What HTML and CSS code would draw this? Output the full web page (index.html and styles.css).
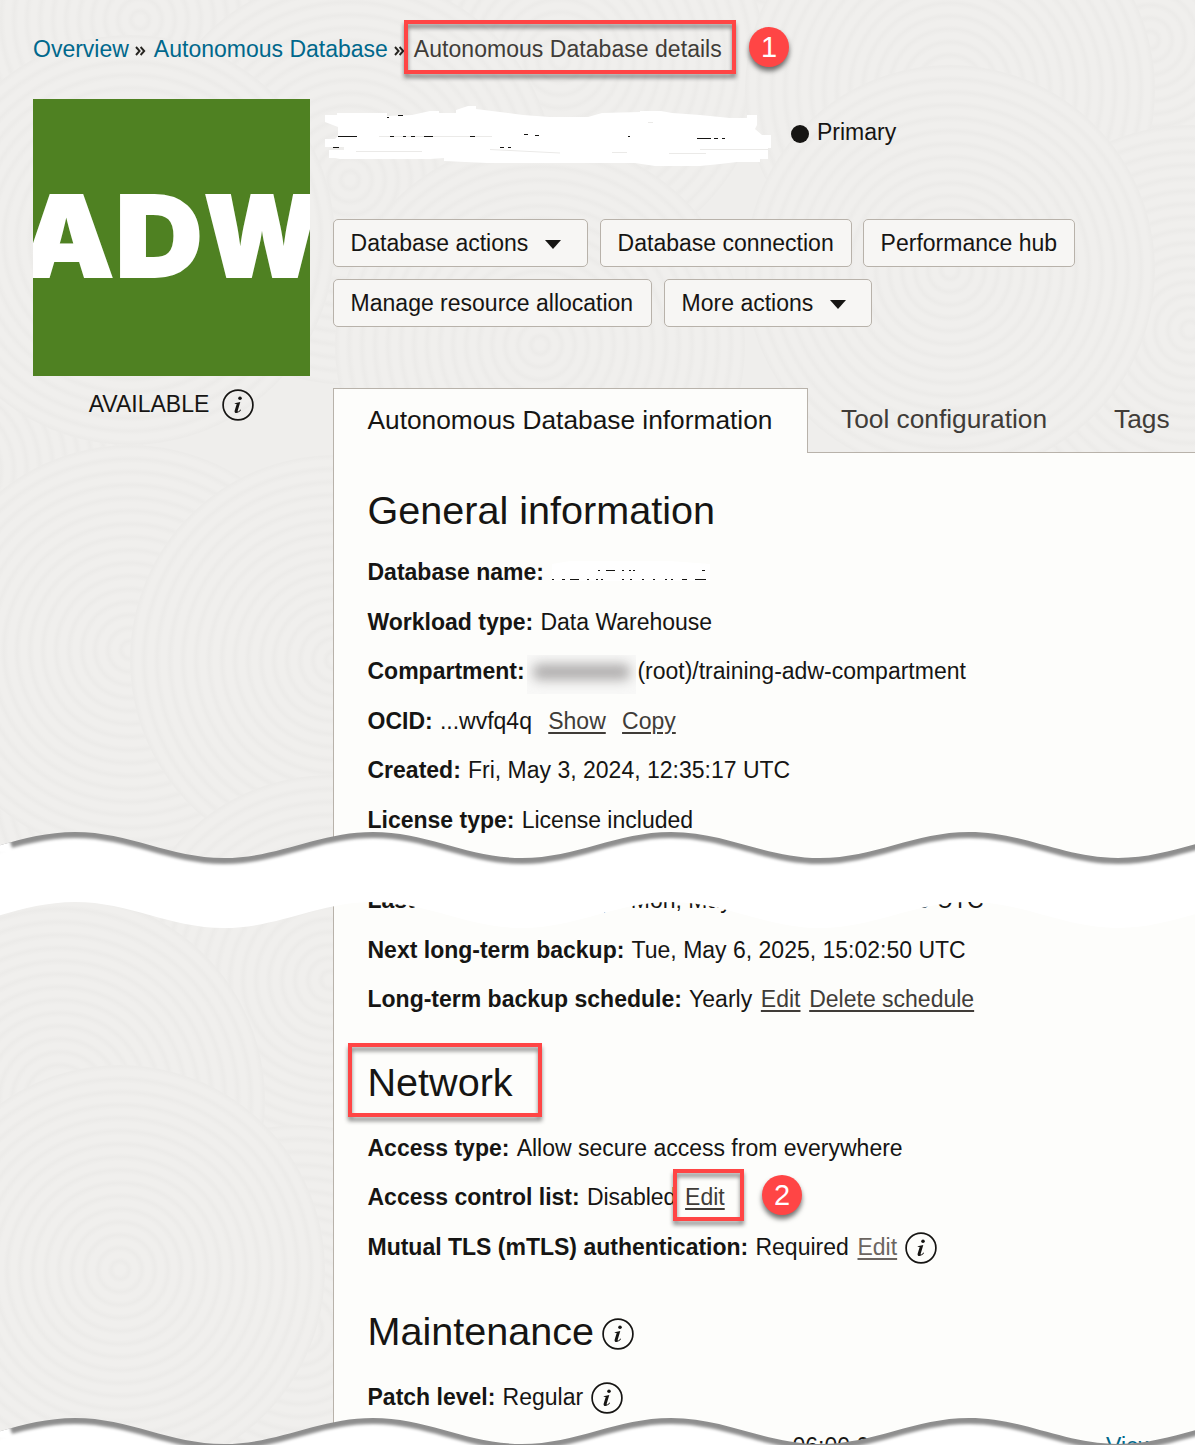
FILE: index.html
```html
<!DOCTYPE html>
<html lang="en">
<head>
<meta charset="utf-8">
<title>Autonomous Database details</title>
<link rel="stylesheet" href="styles.css">
</head>
<body>
<svg class="defs" width="0" height="0" aria-hidden="true">
  <defs>
    <radialGradient id="grain" gradientUnits="userSpaceOnUse" cx="0" cy="0" r="13" spreadMethod="repeat">
      <stop offset="0" stop-color="#f0efed"/><stop offset=".35" stop-color="#f0efed"/>
      <stop offset=".7" stop-color="#ecebe9"/><stop offset="1" stop-color="#f0efed"/>
    </radialGradient>
    <circle id="disc" r="205" fill="url(#grain)"/>
    <symbol id="info" viewBox="0 0 32 32">
      <circle cx="16" cy="16" r="14.900" fill="none" stroke="#161513" stroke-width="1.700"/>
      <circle cx="18" cy="9.300" r="1.800" fill="#161513"/>
      <path d="M12.700 14.200l5.600-1.200-2.600 8.700c-.3 1 .5 1.100 1.100.5l1.700-1.700.6.600c-1.800 2.200-3.300 3-4.700 3-1.600 0-2.100-1.100-1.700-2.600l2-6.500-2-.2z" fill="#161513"/>
    </symbol>
    <path id="wave" d="M-74 26C-19.700 26 20.700 0 75 0S169.700 26 224 26S318.700 0 373 0S467.700 26 522 26S616.700 0 671 0S765.700 26 820 26S914.700 0 969 0S1063.700 26 1118 26S1212.700 0 1267 0V56H-74Z"/>
    <clipPath id="wave-clip"><use href="#wave"/></clipPath>
    <filter id="soft" x="-5%" y="-20%" width="110%" height="140%"><feGaussianBlur stdDeviation="1.5"/></filter>
  </defs>
</svg>
<div class="page">
  <svg class="texture" viewBox="0 0 1195 1445" aria-hidden="true">
    <use href="#disc" x="140" y="20"/><use href="#disc" x="780" y="-70"/><use href="#disc" x="1150" y="40"/>
    <use href="#disc" x="560" y="60"/><use href="#disc" x="350" y="180"/><use href="#disc" x="950" y="90"/>
    <use href="#disc" x="1190" y="330"/><use href="#disc" x="950" y="270"/><use href="#disc" x="540" y="345"/>
    <use href="#disc" x="-60" y="470"/><use href="#disc" x="130" y="240"/><use href="#disc" x="-50" y="880"/>
    <use href="#disc" x="160" y="780"/><use href="#disc" x="130" y="650"/><use href="#disc" x="335" y="660"/>
    <use href="#disc" x="330" y="980"/><use href="#disc" x="-40" y="1350"/><use href="#disc" x="60" y="1100"/>
    <use href="#disc" x="300" y="1330"/><use href="#disc" x="120" y="1270"/>
  </svg>

  <nav class="crumbs">
    <a>Overview</a><svg class="sep" viewBox="0 0 11 10"><path d="M1 1l3.600 4-3.600 4M5.600 1l3.600 4-3.600 4"/></svg>
    <a>Autonomous Database</a><svg class="sep sep2" viewBox="0 0 11 10"><path d="M1 1l3.600 4-3.600 4M5.600 1l3.600 4-3.600 4"/></svg>
    <span class="current">Autonomous Database details</span>
  </nav>

  <div class="columns">
    <aside class="side">
      <svg class="tile" viewBox="0 0 277 277">
        <rect width="277" height="277" fill="#4f8122"/>
        <g class="tile-text">
          <text x="-13" y="178" textLength="94" lengthAdjust="spacingAndGlyphs">A</text>
          <text x="82.500" y="178" textLength="87" lengthAdjust="spacingAndGlyphs">D</text>
          <text x="171" y="178" textLength="116" lengthAdjust="spacingAndGlyphs">W</text>
        </g>
      </svg>
      <div class="status">AVAILABLE <svg class="info"><use href="#info"/></svg></div>
    </aside>

    <main class="main">
      <header class="title">
        <svg class="scribble" viewBox="325 100 450 70">
          <path fill="#fff" d="M325 115H337V113H387V116L412 115L430 111H439V113H456V110L462 108L468 106H476V109L500 112L523 115L550 117H588L602 113L640 112V111H661L672 113L700 115L730 118L747 118V115H757V125L755 129L762 135H771V148H768V159H760V162H737L720 164L700 166H655L635 163H487L444 161V158L430 159H340L335 158H329V150H344V147H325V139H335L338 136V127L325 122Z"/>
          <path stroke="#ebeae8" d="M356 151.500H422M379 136.500H492M490 149.500L560 153M612 152.500H627M669 153.500H706M648 122.500H653M700 149.500H768"/>
          <path stroke="#161513" d="M338 136.500H357M333 147.500H339M387 117.500H389M398 115.500H403M390 136.500H394M403 136.500H406M411 136.500H415M424 136.500H433M470 136.500H475M500 147.500H504M508 147.500H511M524 134.500H528M535 135.500H539M628 136.500H630M697 138.500H711M714 138.500H718M722 138.500H725"/>
        </svg>
        <span class="dot"></span><span>Primary</span>
      </header>

      <div class="actions">
        <button class="btn w1">Database actions<i class="caret"></i></button>
        <button class="btn w2">Database connection</button>
        <button class="btn w3">Performance hub</button>
        <button class="btn w4">Manage resource allocation</button>
        <button class="btn w5">More actions<i class="caret"></i></button>
      </div>

      <div class="tabs">
        <div class="tab active">Autonomous Database information</div>
        <div class="tab tool">Tool configuration</div>
        <div class="tab tags">Tags</div>
      </div>

      <section class="panel">
        <h2 class="general">General information</h2>
        <div class="row"><b>Database name:</b>
          <svg class="hidden-name" viewBox="0 0 160 22"><path fill="#fff" d="M2 3L20 0H120L160 3V20H2Z"/><path stroke="#161513" stroke-width="1.200" d="M2 18.500h2M12 18.500h3M20 18.500h9M37 18.500h2M46 18.500h2M51 18.500h2M72 18.500h2M80 18.500h2M92 18.500h2M103 18.500h2M115 18.500h2M121 18.500h2M132 18.500h5M145 18.500h11M48 9.500h2M56 9.500h9M72 9.500h2M79 9.500h2M83 9.500h2M152 9.500h3"/></svg>
        </div>
        <div class="row"><b>Workload type:</b><span>Data Warehouse</span></div>
        <div class="row"><b>Compartment:</b><span class="smudge"><i></i></span><span>(root)/training-adw-compartment</span></div>
        <div class="row"><b>OCID:</b><span>...wvfq4q</span><a class="far">Show</a><a class="far">Copy</a></div>
        <div class="row"><b>Created:</b><span>Fri, May 3, 2024, 12:35:17 UTC</span></div>
        <div class="row"><b>License type:</b><span>License included</span></div>
        <div class="gap"></div>
        <div class="row"><b class="wide">Last long-term backup:</b><span>Mon, May 13, 2024, 15:02:50 UTC</span></div>
        <div class="row"><b>Next long-term backup:</b><span>Tue, May 6, 2025, 15:02:50 UTC</span></div>
        <div class="row"><b>Long-term backup schedule:</b><span>Yearly</span><a>Edit</a><a>Delete schedule</a></div>
        <h2 class="network">Network</h2>
        <div class="row"><b>Access type:</b><span>Allow secure access from everywhere</span></div>
        <div class="row"><b>Access control list:</b><span>Disabled</span><a class="acl">Edit</a></div>
        <div class="row"><b>Mutual TLS (mTLS) authentication:</b><span>Required</span><a class="dim">Edit</a><svg class="info"><use href="#info"/></svg></div>
        <h2 class="maint">Maintenance<svg class="info"><use href="#info"/></svg></h2>
        <div class="row"><b>Patch level:</b><span>Regular</span><svg class="info"><use href="#info"/></svg></div>
        <div class="row last"><span class="time">06:00:00</span><a class="view">View</a></div>
      </section>
    </main>
  </div>

  <svg class="tear" viewBox="0 0 1195 1445" aria-hidden="true">
    <path fill="#fff" d="M-74 870H1267V902C1212.700 902 1172.300 928 1118 928S1023.300 902 969 902S874.300 928 820 928S725.300 902 671 902S576.300 928 522 928S427.300 902 373 902S278.300 928 224 928S129.300 902 75 902S-19.700 928 -74 928Z"/>
    <g transform="translate(0 832)"><g clip-path="url(#wave-clip)"><rect width="1195" height="80" fill="#8e8e8e"/><use href="#wave" y="6" fill="#fff" filter="url(#soft)"/><path d="M-9 0H7L14 22H-9Z" fill="#fff" filter="url(#soft)"/><rect y="40" width="1195" height="40" fill="#fff"/></g></g>
    <g transform="translate(0 1418)"><g clip-path="url(#wave-clip)"><rect width="1195" height="80" fill="#8e8e8e"/><use href="#wave" y="6" fill="#fff" filter="url(#soft)"/><path d="M-9 0H7L14 22H-9Z" fill="#fff" filter="url(#soft)"/></g></g>
  </svg>
  <div class="mark m1"></div><div class="mark m2"></div><div class="mark m3"></div>
  <div class="bubble b1">1</div><div class="bubble b2">2</div>
</div>
</body>
</html>
```
FILE: styles.css
```css
* { box-sizing: border-box; }
body { margin: 0; }
.defs { position: absolute; }
.page {
  position: relative; width: 1195px; height: 1445px; overflow: hidden;
  background: #efeeec; color: #161513;
  font-family: "Liberation Sans", Arial, sans-serif; font-size: 23px; line-height: 28px;
}
.texture, .tear { position: absolute; left: 0; top: 0; width: 1195px; height: 1445px; }
.crumbs { position: relative; display: flex; align-items: center; height: 99px; padding: 0 0 1px 33px; white-space: nowrap; }
.crumbs a { color: #00688c; }
.crumbs .current { color: #403c38; letter-spacing: .04px; }
.sep { width: 11px; height: 10px; margin: 4px 8px 0 6px; fill: none; stroke: #262420; stroke-width: 1.9; }
.sep2 { margin: 4px 8.5px 0 6.5px; }
.columns { position: relative; display: grid; grid-template-columns: 277px 862px; column-gap: 23px; padding-left: 33px; }
.tile { display: block; width: 277px; height: 277px; overflow: hidden; }
.tile-text { font-family: Inter, sans-serif; font-weight: 900; font-size: 112.500px; fill: #fff; stroke: #fff; stroke-width: 2; }
.status { display: flex; justify-content: center; align-items: center; gap: 13px; height: 55px; white-space: nowrap; }
.info { flex: none; width: 32px; height: 32px; }
.status .info { margin-top: 3px; }
.title { display: flex; align-items: center; height: 120px; padding-bottom: 54px; }
.scribble { flex: none; width: 450px; height: 70px; margin: 6px 16px 0 -8px; }
.dot { width: 18px; height: 18px; margin: 3px 8px 0 0; border-radius: 50%; background: #161513; }
.actions { display: flex; flex-wrap: wrap; gap: 12px; height: 169px; align-content: flex-start; }
.btn {
  display: flex; align-items: center; height: 48px; padding: 0 0 1px 16.600px; white-space: nowrap;
  border: 1px solid #b8b2aa; border-radius: 5px; background: #f7f6f4; color: #161513;
  font: 23px/28px "Liberation Sans", Arial, sans-serif;
}
.w1 { width: 255px; } .w2 { width: 252px; } .w3 { width: 212px; margin-left: -1px; } .w4 { width: 319px; } .w5 { width: 208px; }
.caret { margin: 3px 0 0 17px; border: 8.500px solid transparent; border-top: 9px solid #161513; border-bottom: 0; }
.tabs { display: flex; height: 65px; font-size: 26.300px; white-space: nowrap; }
.tab { height: 65px; padding-top: 17px; border-bottom: 1px solid #b8b2aa; color: #403c38; }
.tab.active { width: 475px; padding: 17px 0 0 33.500px; border: 1px solid #b8b2aa; border-bottom: 0; background: #fdfdfb; color: #161513; }
.tool { width: 273px; padding-left: 33px; }
.tags { flex: 1; padding-left: 33px; }
.panel { height: 1000px; padding-left: 33.500px; border-left: 1px solid #b8b2aa; background: #fdfdfb; }
h2 { display: flex; align-items: center; gap: 8px; margin: 0; font-size: 39.600px; font-weight: 400; line-height: 60px; }
h2 .info { margin-top: 6px; }
.general { padding: 27px 0 7.250px; }
.network { padding: 27.500px 0 11.500px; }
.maint { padding: 29.500px 0 11px; }
.row { display: flex; align-items: center; gap: 8px; height: 49.500px; white-space: nowrap; }
.row b { margin-right: -.8px; }
.row b.wide { margin-right: 1px; }
.row a { margin-left: .7px; color: #403c38; text-decoration: underline; text-decoration-thickness: 2px; text-underline-offset: 3px; }
.row a.far { margin-left: 8.300px; }
.row a.dim { color: #6b6560; }
.row .info { margin-top: 2px; }
.gap { height: 31.400px; }
.hidden-name { width: 160px; height: 22px; margin-left: -1px; }
.smudge { width: 109px; height: 39px; margin: 6px -7px 0 -4.500px; padding: 9px 6px; overflow: hidden; background: #f8f8f7; }
.smudge i { display: block; width: 97px; height: 16px; border-radius: 6px; background: #b0aeae; filter: blur(6px); }
.last .time { margin-left: 425px; }
.row a.view { margin-left: 216px; color: #00688c; }
.mark { position: absolute; border: 4px solid #ff4545; filter: drop-shadow(0 4px 2px rgba(0,0,0,.45)); }
.m1 { left: 404px; top: 20px; width: 332px; height: 54px; }
.m2 { left: 348px; top: 1043px; width: 194px; height: 74px; }
.m3 { left: 673px; top: 1169px; width: 71px; height: 52px; }
.bubble {
  position: absolute; width: 40px; height: 40px; border-radius: 50%; background: #ff4545; color: #fff;
  font-size: 29px; line-height: 40px; text-align: center; box-shadow: 0 4px 5px rgba(0,0,0,.55);
}
.b1 { left: 749px; top: 27px; }
.b2 { left: 762px; top: 1175px; }
```
